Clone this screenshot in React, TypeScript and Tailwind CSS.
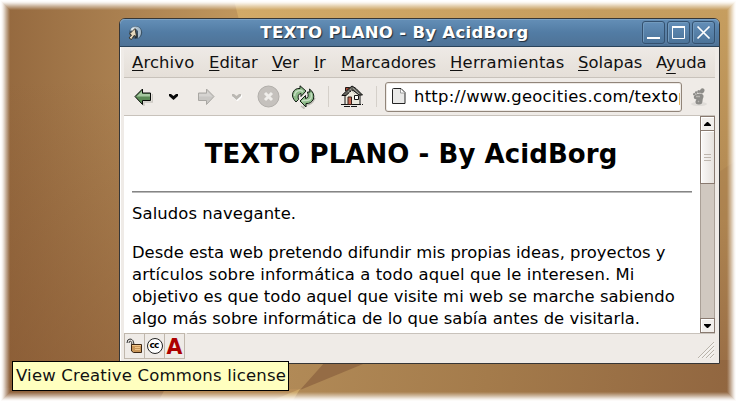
import React from "react";

const menus: { before: string; key: string; after: string; w: string }[] = [
  { before: "", key: "A", after: "rchivo", w: "w-[77px] tracking-[0.15px]" },
  { before: "", key: "E", after: "ditar", w: "w-[63px] tracking-[0.05px]" },
  { before: "", key: "V", after: "er", w: "w-[42px] tracking-[0.05px]" },
  { before: "", key: "I", after: "r", w: "w-[27px] tracking-[0.05px]" },
  { before: "", key: "M", after: "arcadores", w: "w-[109px]" },
  { before: "", key: "H", after: "erramientas", w: "w-[128px] tracking-[0.25px]" },
  { before: "", key: "S", after: "olapas", w: "w-[78px] tracking-[0.05px]" },
  { before: "A", key: "y", after: "uda", w: "w-[58px]" },
];

function Wallpaper() {
  return (
    <svg className="absolute inset-0" width="737" height="402" viewBox="0 0 737 402">
      <defs>
        <linearGradient id="left" gradientUnits="userSpaceOnUse" x1="0" y1="0" x2="240" y2="0">
          <stop offset="0" stopColor="#94683e" />
          <stop offset="0.5" stopColor="#aa8050" />
          <stop offset="1" stopColor="#c0975d" />
        </linearGradient>
        <linearGradient id="leftFall" x1="0" y1="0" x2="0" y2="1">
          <stop offset="0.2" stopColor="#83532f" stopOpacity="0" />
          <stop offset="1" stopColor="#83532f" stopOpacity="0.55" />
        </linearGradient>
        <linearGradient id="right" x1="0" y1="0" x2="0" y2="1">
          <stop offset="0" stopColor="#c79f60" />
          <stop offset="0.4" stopColor="#b68d55" />
          <stop offset="1" stopColor="#956943" />
        </linearGradient>
        <linearGradient id="band" x1="0" y1="0" x2="1" y2="0">
          <stop offset="0" stopColor="#d2aa67" />
          <stop offset="1" stopColor="#c69d5e" />
        </linearGradient>
        <linearGradient id="floor" gradientUnits="userSpaceOnUse" x1="290" y1="350" x2="730" y2="410">
          <stop offset="0" stopColor="#b18a57" />
          <stop offset="0.45" stopColor="#a47b4b" />
          <stop offset="1" stopColor="#916640" />
        </linearGradient>
        <linearGradient id="floorLeft" gradientUnits="userSpaceOnUse" x1="0" y1="0" x2="290" y2="0">
          <stop offset="0" stopColor="#8e603b" />
          <stop offset="0.45" stopColor="#9d7148" />
          <stop offset="1" stopColor="#aa804f" />
        </linearGradient>
      </defs>
      <rect width="300" height="402" fill="url(#left)" />
      <rect width="300" height="402" fill="url(#leftFall)" />
      <rect x="300" width="437" height="402" fill="url(#right)" />
      <path d="M234 0H600L585 20H239Z" fill="url(#band)" />
      <path d="M719 172L737 160V220H719Z" fill="#a97f4d" opacity=".5" />
      <path d="M0 388H290V402H0Z" fill="url(#floorLeft)" />
      <path d="M288 360H737V402H288Z" fill="url(#floor)" />
      <path d="M325 362H368L300 390Z" fill="#956c45" />
      <path d="M165 389H302L268 402H158Z" fill="#bb905b" opacity=".75" />
      <path d="M300 389L268 402H292Z" fill="#cca668" />
      <g fill="none" stroke="white">
        <rect x=".5" y=".5" width="736" height="401" />
        <rect x="1.5" y="1.5" width="734" height="399" strokeOpacity=".97" />
        <rect x="2.5" y="2.5" width="732" height="397" strokeOpacity=".9" />
        <rect x="3.5" y="3.5" width="730" height="395" strokeOpacity=".8" />
        <rect x="4.5" y="4.5" width="728" height="393" strokeOpacity=".68" />
        <rect x="5.5" y="5.5" width="726" height="391" strokeOpacity=".55" />
        <rect x="6.5" y="6.5" width="724" height="389" strokeOpacity=".42" />
        <rect x="7.5" y="7.5" width="722" height="387" strokeOpacity=".3" />
        <rect x="8.5" y="8.5" width="720" height="385" strokeOpacity=".18" />
        <rect x="9.5" y="9.5" width="718" height="383" strokeOpacity=".07" />
      </g>
    </svg>
  );
}

function AppIcon() {
  return (
    <svg width="16" height="16" viewBox="0 0 16 16">
      <circle cx="8.7" cy="7.5" r="6.5" fill="#3c5468" />
      <path d="M3 6Q4 1 9 1.5Q14 2 14 7Q14 11 11 13V6L8 3Z" fill="#a9bdcc" />
      <path d="M4 4Q7 1.500 10 3.500L8 4L5 7Z" fill="#dfe9ef" />
      <path d="M8 3.500L9.500 11.500L7 10.500L4.500 14.500L2 13L4.500 10L2.500 9Z" fill="#e6d9bd" stroke="#302d25" strokeWidth=".9" />
      <path d="M10 6L10.500 12L8.500 13.500L8 11.500L9.800 12Z" fill="#1c252d" />
    </svg>
  );
}

function TitleBar() {
  const button =
    "flex h-[23px] w-[23px] items-center justify-center rounded-[3px] border border-[#34516f] bg-linear-to-b from-[#648fb8] to-[#4b7399] shadow-[inset_1px_1px_0_#729abd,0_0_0_1px_#668bad55]";
  return (
    <div className="flex h-[28px] shrink-0 items-center rounded-t-[5px] border-b border-[#29435b] bg-linear-to-b from-[#648fb7] via-[#527ca4] to-[#4e7296] pl-[7px] pr-[4px] shadow-[inset_0_1px_0_#7ba1c3]">
      <AppIcon />
      <div className="flex-1 pt-px pl-[4px] text-center text-[16.5px] font-bold leading-[26px] tracking-[0.3px] whitespace-nowrap text-white [text-shadow:1px_1px_1px_#202d3b]">
        <span>TEXTO PLANO - By AcidBorg</span>
      </div>
      <div className="flex gap-[2px]">
        <div className={button}>
          <svg width="21" height="21"><path d="M4 16H17" stroke="white" strokeWidth="2" /></svg>
        </div>
        <div className={button}>
          <svg width="21" height="21"><path d="M4.5 4.500H16.500V16.500H4.500Z" fill="none" stroke="white" /><path d="M4 5H17" stroke="white" strokeWidth="2" /></svg>
        </div>
        <div className={button}>
          <svg width="21" height="21"><path d="M4.500 4.500L16.500 16.500M16.500 4.500L4.500 16.500" stroke="white" strokeWidth="1.7" /></svg>
        </div>
      </div>
    </div>
  );
}

function Arrow({ forward = false }: { forward?: boolean }) {
  const edge = forward ? "#a9a7a3" : "#080b08";
  return (
    <svg width="19" height="18" viewBox="0 0 19 18" className={forward ? "-scale-x-100" : ""}>
      {!forward && <path d="M3 10L10 17.500V14H18.500V6" fill="none" stroke="#aaa79f" strokeWidth="1.3" opacity=".5" />}
      <path d="M1 8.500L8.500 1V5H16.500V12.500H8.500V16.500Z" fill={forward ? "#c9c7c4" : "#5a8a55"} stroke={edge} />
      <path d="M2.500 8.500L8 3V6H16V8.500Z" fill={forward ? "#d6d4d1" : "#a5c9a0"} />
    </svg>
  );
}

function Chevron({ disabled = false }: { disabled?: boolean }) {
  return (
    <svg width="10" height="8" viewBox="0 0 10 8">
      {disabled && <path d="M1 3.500L5.500 7L10 2.500" fill="none" stroke="white" strokeWidth="2" />}
      <path d="M0 1H2L4.500 3L7 1H9V3L4.500 7L0 3Z" fill={disabled ? "#bbb8b3" : "#090909"} />
    </svg>
  );
}

function ReloadIcon() {
  return (
    <svg width="25" height="24" viewBox="0 0 25 24">
      <path d="M10 21L13 23.500V20Q21 21 24 13" fill="none" stroke="#9b9991" strokeWidth="1.3" opacity=".6" />
      <path d="M5 17Q0 12 2 7.500Q4 3 9 3.500V.8L15 6L10 11.500V8.500Q6 9 7.500 14.500Z" fill="#8fbb8a" stroke="#101a12" />
      <path d="M18.500 4Q24 8 22.500 14Q20 19 15 18.500V22L9 16L14.500 10.500V13.500Q18.500 13 16.500 7L19 7Z" fill="#8fbb8a" stroke="#101a12" />
      <path d="M3.500 11Q4 5 10 5.500L12 6.500M20 8Q22 15 15.500 15.500H13L11 16" fill="none" stroke="#c7dfc4" strokeWidth="1.4" />
    </svg>
  );
}

function HomeIcon() {
  return (
    <svg width="23" height="23" viewBox="0 0 23 23">
      <path d="M0 19.500H22M3 21.500H17" stroke="#161616" strokeWidth="1.2" strokeDasharray="6 1" />
      <path d="M4 10L11 3L19 10V19.500H4Z" fill="#eceade" stroke="#151515" />
      <path d="M4.500 6V2.500H8.500V5" fill="#a54735" stroke="#201914" />
      <path d="M.8 10.500L8 3.500L11 1L15 3.500L21.500 10H18L13 6L11 5L5 10.500Z" fill="#65655f" stroke="#0f0f0f" />
      <path d="M9 4L14 9M12 3L18 9M7 6L9 8" stroke="#b8b7ad" strokeWidth=".7" />
      <path d="M7 12H10.500V19.500H7Z" fill="#c96853" stroke="#35201a" />
      <path d="M13.500 10.500H17.500V14.500H13.500Z" fill="#fbfcf8" stroke="#111" />
    </svg>
  );
}

function FootIcon() {
  return (
    <svg width="17" height="20" viewBox="0 0 17 20">
      <ellipse cx="8" cy="17" rx="8" ry="2" fill="#dfdcd8" />
      <g fill="#8d8c89">
        <ellipse cx="11.300" cy="3.800" rx="2.200" ry="2.700" transform="rotate(25 11 3.500)" />
        <circle cx="7.800" cy="4.500" r="1.500" /><circle cx="5.200" cy="5.600" r="1.300" /><circle cx="3.200" cy="7.200" r="1.200" />
        <path d="M3 9Q5 6.500 8.500 6.500Q13 6.500 12.500 10Q11.500 12 11.500 14Q11.500 17.500 8 17.500Q4 17.500 4.500 14L5.500 12.500Q2 12 3 9Z" />
      </g>
      <path d="M5 9.500H9M7 14L8 15" stroke="#b6b4b0" strokeWidth="1.300" />
    </svg>
  );
}

function Toolbar() {
  return (
    <div className="flex h-[38px] shrink-0 items-center border-b border-[#c8c2bb] pl-[10px]">
      <div className="flex w-[35px]"><Arrow /></div>
      <div className="flex w-[27px]"><Chevron /></div>
      <div className="flex w-[36px]"><Arrow forward /></div>
      <div className="flex w-[25px]"><Chevron disabled /></div>
      <div className="flex w-[34px]">
        <svg width="23" height="23" viewBox="0 0 23 23">
          <circle cx="11.500" cy="11.500" r="10.500" fill="#c5c1bd" stroke="#b1aeaa" />
          <path d="M8 8L15 15M15 8L8 15" stroke="#f0eeeb" strokeWidth="3" />
        </svg>
      </div>
      <div className="flex w-[37px]"><ReloadIcon /></div>
      <div className="flex h-[21px] w-[13px] border-l border-[#d5d0ca]" />
      <div className="flex w-[35px]"><HomeIcon /></div>
      <div className="h-[21px] w-[9px] border-l border-[#d5d0ca]" />
      <div className="flex h-[30px] w-[297px] items-center overflow-hidden rounded-[3px] border border-[#91857a] bg-white pl-[6px] shadow-[inset_0_0_0_1px_#eeeae6]">
        <svg className="shrink-0" width="14" height="17" viewBox="0 0 14 17">
          <path d="M.5 1.500Q.5.500 1.500.500H9L13 4.500V15.500H.5Z" fill="#e9e9e8" stroke="#242424" />
          <path d="M8.500 1V5H12.500" fill="white" stroke="#888" strokeWidth=".8" />
        </svg>
        <div className="ml-[8px] w-[266px] overflow-hidden pt-px text-[16.4px] leading-[26px] tracking-[0.28px] whitespace-nowrap text-black">
          <span>http://www.geocities.com/textop</span>
        </div>
      </div>
      <div className="ml-[9px]"><FootIcon /></div>
    </div>
  );
}

function Scrollbar() {
  const button = "flex h-[15px] w-[15px] shrink-0 items-center justify-center border border-[#897a70] bg-[#f2efec] shadow-[inset_1px_1px_0_white]";
  return (
    <div className="flex w-[15px] shrink-0 flex-col border-x border-[#aaa097] bg-[#d0c8c0]">
      <div className={`${button} -ml-px`}><svg width="7" height="4"><path d="M3 0H4L7 3V4H0V3Z" /></svg></div>
      <div className="-ml-px -mt-px flex h-[54px] w-[15px] flex-col items-center justify-center gap-[2px] border border-[#897a70] bg-linear-to-r from-[#faf8f7] to-[#e6e2de] shadow-[inset_1px_1px_0_white]">
        <div className="h-px w-[7px] bg-[#beb6ae]" />
        <div className="h-px w-[7px] bg-[#beb6ae]" />
        <div className="h-px w-[7px] bg-[#beb6ae]" />
      </div>
      <div className="flex-1" />
      <div className={`${button} -ml-px`}><svg width="7" height="4"><path d="M0 0H7V1L4 4H3L0 1Z" /></svg></div>
    </div>
  );
}

function Page() {
  return (
    <div className="h-[217px] flex-1 overflow-hidden bg-white px-[8px] text-[16.4px] leading-[22px] whitespace-nowrap text-black">
      <h1 className="pt-[22px] pr-[2px] text-center text-[26px] font-bold leading-[32px] tracking-[0.07px]"><span>TEXTO PLANO - By AcidBorg</span></h1>
      <div className="mt-[21px] h-[2px] border-t border-[#858585] bg-[#bababa]" />
      <p className="mt-[10px] tracking-[0.1px]"><span>Saludos navegante.</span></p>
      <p className="mt-[17px]">
        <span className="block">Desde esta web pretendo difundir mis propias ideas, proyectos y</span>
        <span className="block tracking-[0.13px]">artículos sobre informática a todo aquel que le interesen. Mi</span>
        <span className="block tracking-[0.06px]">objetivo es que todo aquel que visite mi web se marche sabiendo</span>
        <span className="block tracking-[0.03px]">algo más sobre informática de lo que sabía antes de visitarla.</span>
      </p>
    </div>
  );
}

function StatusBar() {
  const cell = "flex h-[26px] items-center justify-center border border-[#c0b7ac]";
  return (
    <div className="flex h-[29px] shrink-0 items-start">
      <div className={`${cell} w-[21px]`}>
        <svg width="18" height="18" viewBox="0 0 18 18">
          <path d="M1 6Q1 2 4 2Q8 2 8 9M3 6Q3 4 4.500 4Q6 4 6 9" fill="none" stroke="#303030" />
          <path d="M5.500 7.500H15.500V15.500H7.500L5.500 14Z" fill="#c99659" stroke="#3c2614" />
          <path d="M6 8.500H15M9 10.500H14M9 12.500H14" stroke="#f0c487" />
        </svg>
      </div>
      <div className={`${cell} -ml-px w-[21px]`}>
        <div className="flex h-[16px] w-[16px] items-center justify-center rounded-full border-[1.5px] border-[#222] bg-white text-[9px] font-bold leading-none tracking-[-0.8px] text-black"><span className="-mt-[2px] -ml-px">cc</span></div>
      </div>
      <div className={`${cell} -ml-px w-[21px] pt-px text-[20.5px] font-bold leading-[22px] text-[#ad0000]`}>A</div>
      <div className="ml-[2px] h-px flex-1 bg-[#c8c2bb]" />
      <svg className="-ml-[18px] mt-[8px]" width="18" height="18">
        <path d="M1 17L17 1M5 17L17 5M9 17L17 9M13 17L17 13" stroke="#b9b3aa" />
        <path d="M2 17.500L17.500 2M6 17.500L17.500 6M10 17.500L17.500 10M14 17.500L17.500 14" stroke="white" strokeWidth=".7" />
      </svg>
    </div>
  );
}

export default function App() {
  return (
    <main className="relative h-[402px] w-[737px] overflow-hidden bg-[#a87e4e] font-['DejaVu_Sans',sans-serif]">
      <Wallpaper />
      <section className="absolute left-[119px] top-[18px] flex h-[346px] w-[601px] flex-col rounded-t-[6px] border border-[#363636] bg-[#efebe7]">
        <TitleBar />
        <div className="flex flex-1 flex-col border-l border-white pr-[4px] pl-[3px]">
          <nav className="flex h-[31px] shrink-0 items-center border-b border-[#c8c2bb] bg-linear-to-b from-[#eeeae6] to-[#e5dfd8] pt-px pl-[8px] text-[16.4px] leading-[20px] whitespace-nowrap text-[#111]">
            {menus.map((item) => (
              <div key={item.key} className={`shrink-0 ${item.w}`}>
                {item.before}<span className={`underline decoration-1 [text-decoration-skip-ink:none] ${item.key === "y" ? "underline-offset-[5px]" : "underline-offset-[2px]"}`}>{item.key}</span>{item.after}
              </div>
            ))}
          </nav>
          <Toolbar />
          <div className="flex h-[217px] shrink-0"><Page /><Scrollbar /></div>
          <StatusBar />
        </div>
      </section>
      <div className="absolute left-[12px] top-[361px] flex h-[30px] w-[277px] items-center border border-black bg-[#ffffbf] pt-px pl-[3px] text-[16.5px] tracking-[0.19px] whitespace-nowrap text-[#111]">
        <span>View Creative Commons license</span>
      </div>
    </main>
  );
}
